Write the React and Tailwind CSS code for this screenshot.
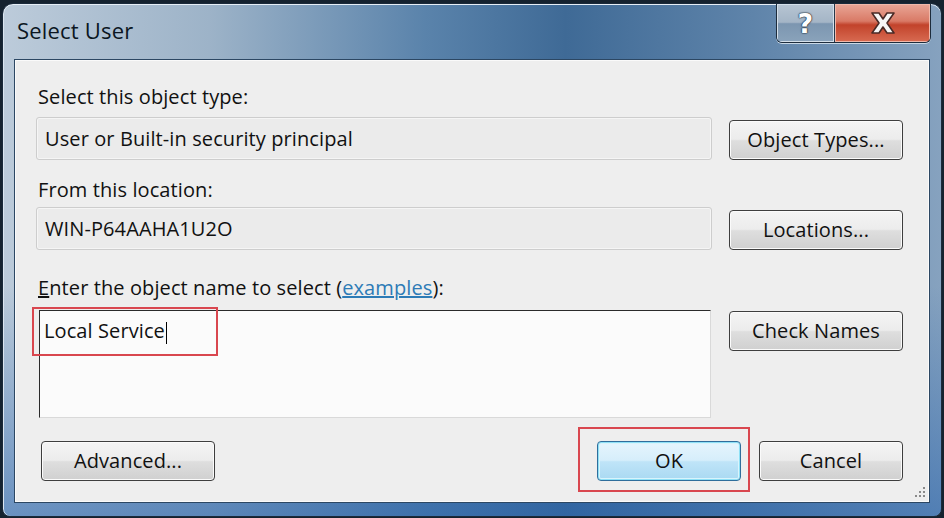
import React from "react";

// Win7 style push button
function WinButton({ children, className = "", primary = false }) {
  const face = primary
    ? "border-[#2f6e9c] bg-[linear-gradient(#e6f5fd_0%,#d6eefb_48%,#bfe4f8_52%,#a9d9f2_100%)] shadow-[inset_0_0_0_1px_#8fe0f6,inset_0_0_0_2px_#d8f4fc]"
    : "border-[#3e3e3e] bg-[linear-gradient(#f4f4f4_0%,#ececec_48%,#dedede_52%,#d0d0d0_100%)] shadow-[inset_0_0_0_1px_#fbfbfb]";
  return (
    <div
      className={`flex items-center justify-center border rounded-[4px] text-[#111] ${face} ${className}`}
    >
      {children}
    </div>
  );
}

function Label({ children, className = "" }) {
  return <div className={`h-[24px] leading-[24px] pl-[2px] text-[#111] ${className}`}>{children}</div>;
}

function ReadBox({ children }) {
  return (
    <div className="w-[676px] h-[43px] flex items-center pl-[8px] rounded-[3px] border border-[#cdcdcd] bg-[#ebebeb] shadow-[inset_0_0_0_1px_#f5f5f5] text-[#111]">
      {children}
    </div>
  );
}

export default function App() {
  return (
    <div className="w-[944px] h-[518px] overflow-hidden bg-[#15222f] font-['Open_Sans',sans-serif] text-[20px] tracking-[0.1px]">
      <div className="relative mt-[3px] ml-[2px] w-[940px] h-[514px] flex flex-col rounded-t-[11px] rounded-b-[8px] border border-[#1a2a3b] bg-[linear-gradient(180deg,rgba(0,0,0,0)_55%,rgba(38,98,172,0.55)_100%),linear-gradient(90deg,#bccbda_0%,#9db3c8_22%,#5a83ab_45%,#3f6a96_60%,#5f84aa_80%,#86a2bf_100%)] shadow-[inset_0_1px_0_#e6eef6,inset_1px_0_0_#dbe5ef]">
        {/* title bar */}
        <div className="h-[55px] flex justify-between items-start">
          <div className="pl-[14px] pt-[10px] text-[22px] tracking-[0.2px] text-[#0b1622]">Select User</div>
          <div className="flex mr-[10px] h-[39px] border border-t-0 border-[#1d2c3c] rounded-b-[6px] overflow-hidden shadow-[0_1px_0_#c9d8e6]">
            <div className="w-[58px] flex items-center justify-center border-r border-[#26374a] bg-[linear-gradient(#b7c5d3_0%,#a4b5c6_48%,#7c96b0_52%,#8aa3bb_100%)] shadow-[inset_0_0_0_1px_#d5e0ea]">
              <span className="font-['DejaVu_Sans',sans-serif] font-bold text-[27px] leading-none text-white [text-shadow:0_0_2px_#1c2a38,0_0_1px_#1c2a38,0_0_1px_#1c2a38]">?</span>
            </div>
            <div className="w-[95px] flex items-center justify-center bg-[linear-gradient(#e9a697_0%,#d97a66_45%,#c2432b_55%,#d86b52_100%)] shadow-[inset_0_0_0_1px_#f0b8aa]">
              <svg width="32" height="26" viewBox="0 0 32 26">
                <path
                  d="M5 3 L12 3 L16 9 L20 3 L27 3 L20 13 L27 23 L20 23 L16 17 L12 23 L5 23 L12 13 Z"
                  fill="#f6f6f6"
                  stroke="#4a2a26"
                  strokeWidth="1.6"
                  strokeLinejoin="round"
                />
              </svg>
            </div>
          </div>
        </div>

        {/* client area */}
        <div className="relative mx-[11px] mb-[13px] flex-1 flex flex-col pl-[21px] pr-[26px] pt-[25px] bg-[#eeeeee] border border-[#2c4763] shadow-[inset_0_0_0_1px_#fafafa]">
          <Label>Select this object type:</Label>
          <div className="flex gap-[17px] mt-[8px] items-start">
            <ReadBox>User or Built-in security principal</ReadBox>
            <WinButton className="w-[174px] h-[40px] mt-[3px]">Object Types...</WinButton>
          </div>

          <Label className="mt-[18px]">From this location:</Label>
          <div className="flex gap-[17px] mt-[5px] items-start">
            <ReadBox>WIN-P64AAHA1U2O</ReadBox>
            <WinButton className="w-[174px] h-[40px] mt-[3px]">Locations...</WinButton>
          </div>

          <Label className="mt-[26px]">
            <span className="underline">E</span>nter the object name to select (
            <span className="text-[#2d7bb6] underline">examples</span>):
          </Label>
          <div className="flex mt-[10px] items-start">
            <div className="ml-[3px] w-[672px] h-[108px] bg-[#fbfbfb] border border-t-[#2a2a2a] border-l-[#2a2a2a] border-r-[#d9d9d9] border-b-[#d9d9d9] pl-[4px] pt-[5px] text-[#111]">
              <span>Local Service</span>
              <span className="inline-block w-[1px] h-[22px] bg-black align-middle ml-[1px]" />
            </div>
            <div className="flex-1" />
            <WinButton className="w-[174px] h-[40px] mt-[1px]">Check Names</WinButton>
          </div>

          <div className="flex mt-[23px] items-start">
            <WinButton className="ml-[5px] w-[174px] h-[40px]">Advanced...</WinButton>
            <div className="flex-1" />
            <WinButton primary className="w-[144px] h-[40px]">OK</WinButton>
            <WinButton className="ml-[18px] w-[144px] h-[40px]">Cancel</WinButton>
          </div>

          {/* red highlight boxes */}
          <div className="absolute left-[17px] top-[247px] w-[186px] h-[49px] border-2 border-[#d9474f]" />
          <div className="absolute left-[563px] top-[367px] w-[172px] h-[65px] border-2 border-[#d9474f]" />

          {/* size grip */}
          <svg className="absolute right-[3px] bottom-[3px]" width="14" height="14" viewBox="0 0 14 14">
            <g fill="#8a8a8a">
              <rect x="11" y="2" width="2" height="2" />
              <rect x="7" y="6" width="2" height="2" />
              <rect x="11" y="6" width="2" height="2" />
              <rect x="3" y="10" width="2" height="2" />
              <rect x="7" y="10" width="2" height="2" />
              <rect x="11" y="10" width="2" height="2" />
            </g>
          </svg>
        </div>
      </div>
    </div>
  );
}
